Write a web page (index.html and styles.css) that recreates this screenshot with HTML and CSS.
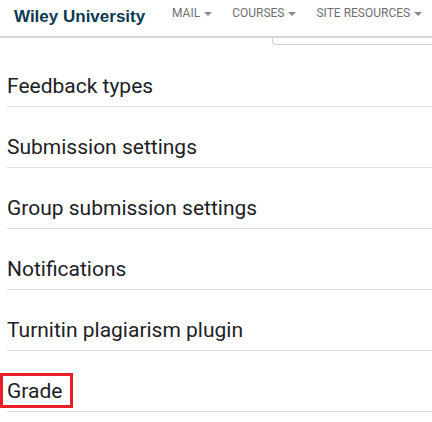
FILE: index.html
```html
<!DOCTYPE html>
<html lang="en">
<head>
<meta charset="utf-8">
<title>Assignment settings</title>
<link rel="stylesheet" href="styles.css">
</head>
<body>
<header class="topbar">
  <div class="brand">Wiley University</div>
  <nav class="nav">
    <span class="nav-item">MAIL<span class="caret"></span></span>
    <span class="nav-item">COURSES<span class="caret"></span></span>
    <span class="nav-item">SITE RESOURCES<span class="caret"></span></span>
  </nav>
</header>
<div class="subbar"><div class="tab-edge"></div></div>
<ul class="sections">
  <li class="section">Feedback types</li>
  <li class="section">Submission settings</li>
  <li class="section">Group submission settings</li>
  <li class="section">Notifications</li>
  <li class="section">Turnitin plagiarism plugin</li>
  <li class="section section-grade"><span class="highlight">Grade</span></li>
</ul>
</body>
</html>
```

FILE: styles.css
```css
html, body {
  margin: 0;
  padding: 0;
  background: #ffffff;
  overflow: hidden;
}

.topbar {
  display: flex;
  align-items: flex-start;
  height: 36px;
  border-bottom: 2px solid #d4d4d4;
}

.brand {
  font-family: "Liberation Sans", Arial, sans-serif;
  font-weight: bold;
  font-size: 17px;
  line-height: 20px;
  color: #0b3950;
  padding: 7px 0 0 14px;
  width: 148px;
  flex-shrink: 0;
  white-space: nowrap;
}

.nav {
  display: flex;
  padding-top: 5px;
  flex-shrink: 0;
}

.nav-item {
  font-family: Roboto, "Noto Sans", sans-serif;
  font-size: 12px;
  line-height: 16px;
  color: #6f6f6f;
  padding: 0 10px;
  display: flex;
  align-items: center;
  white-space: nowrap;
}

.caret {
  display: inline-block;
  width: 0;
  height: 0;
  border-left: 4px solid transparent;
  border-right: 4px solid transparent;
  border-top: 4px solid #8a8a8a;
  margin-left: 4px;
  margin-top: 1px;
}

.subbar {
  display: flex;
  height: 7px;
}

.tab-edge {
  margin-left: 272px;
  flex: 1;
  border-left: 1px solid #cfcfcf;
  border-bottom: 1px solid #cfcfcf;
  border-bottom-left-radius: 4px;
}

.sections {
  list-style: none;
  margin: 1px 0 0 7px;
  padding: 0;
}

.section {
  font-family: Roboto, "Noto Sans", sans-serif;
  font-size: 21px;
  line-height: 24px;
  color: #1d2125;
  padding: 28px 0 8px 0;
  border-bottom: 1px solid #dedede;
}

.section-grade {
  padding: 22px 0 3px 0;
}

.highlight {
  display: inline-block;
  margin-left: -7px;
  border: 3px solid #ea1d2a;
  padding: 3px 8px 2px 4px;
}
```
